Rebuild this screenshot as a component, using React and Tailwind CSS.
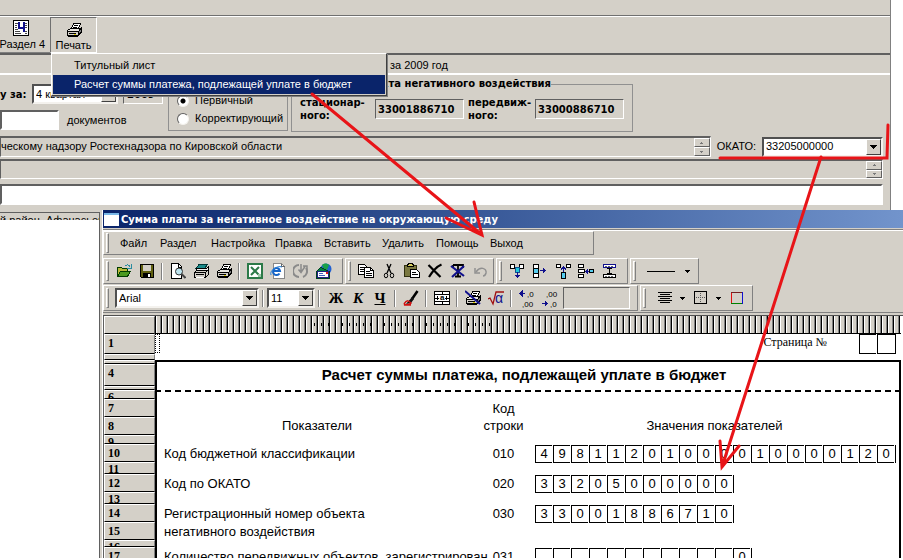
import React from "react";

const ui = "font-['Liberation_Sans',Arial,sans-serif] text-[11px] leading-[13px]";
const boldUi = "font-['DejaVu_Sans',Verdana,sans-serif] font-bold text-[10px] leading-[13px]";
const sunken = "border border-t-[#606060] border-l-[#606060] border-r-white border-b-white";
const raised = "border border-t-white border-l-white border-r-[#808080] border-b-[#808080]";

function Svg({ children, w = 16, h = 16 }) {
  return (
    <svg width={w} height={h} viewBox={`0 0 ${w} ${h}`} shapeRendering="crispEdges" fill="none" className="shrink-0" aria-hidden="true">
      {children}
    </svg>
  );
}

const Down = () => (
  <Svg w={7} h={4}><path d="M0 0h7v1H0zM1 1h5v1H1zM2 2h3v1H2zM3 3h1v1H3z" fill="#000" /></Svg>
);

function Combo({ label, value, className }) {
  return (
    <div className={`relative flex h-[20px] border-2 border-t-[#505050] border-l-[#505050] border-r-[#f4f2ee] border-b-[#f4f2ee] bg-white ${className}`}>
      <select aria-label={label} className="w-full appearance-none bg-white pl-[2px] text-black outline-none">
        <option>{value}</option>
      </select>
      <span className="pointer-events-none absolute inset-y-0 right-0 flex w-[15px] items-center justify-center border border-t-white border-l-white border-r-[#404040] border-b-[#404040] bg-[#d4d0c8]">
        <Down />
      </span>
    </div>
  );
}

function Spinner() {
  return (
    <div className="flex w-[16px] flex-col">
      {["Вверх", "Вниз"].map((n, i) => (
        <button key={n} aria-label={n} className="flex flex-1 items-center justify-center border border-t-white border-l-white border-r-[#606060] border-b-[#606060] bg-[#d4d0c8]">
          <Svg w={3} h={2}>{i ? <path d="M0 0h3v1H0zM1 1h1v1H1z" fill="#777" /> : <path d="M1 0h1v1H1zM0 1h3v1H0z" fill="#777" />}</Svg>
        </button>
      ))}
    </div>
  );
}

const PrinterShape = () => (
  <>
    <path d="M5.500 6.500l2-5h7l-2 5z" fill="#fff" stroke="#000" />
    <path d="M8 3h4M7 5h4" stroke="#000" />
    <path d="M1.500 8.500l3-2h10l-2 3h-11z" fill="#e8e6e0" stroke="#000" />
    <path d="M1.500 9.500h11v4h-11z" fill="#d4d0c8" stroke="#000" />
    <path d="M12.500 9.500l2.500-3v4l-2.500 3z" fill="#808080" stroke="#000" />
    <path d="M3 11.500h7" stroke="#000" /><path d="M8 12h2v1H8z" fill="#e0d000" />
    <path d="M2 14h10v1H2z" fill="#000" />
  </>
);

const icons = {
  open: <><path d="M1.500 13.500v-9h4l1 1h5v3" fill="#b8b838" stroke="#003c00" /><path d="M1.500 13.500l3-5h10l-3 5z" fill="#4a9a20" stroke="#003c00" /><path d="M9 3c2-2 4-1 5 1M15 1v4h-4" stroke="#2a8ca0" /></>,
  save: <><path d="M1.500 1.500h13v13h-12l-1-1z" fill="#606010" stroke="#000" /><path d="M4 2h8v6H4z" fill="#d4d0c8" /><path d="M4 10h8v4H4z" fill="#000" /><path d="M9 11h2v3H9z" fill="#fff" /></>,
  preview: <><path d="M1.500.500h7l3 3v12h-10z" fill="#fff" stroke="#000" /><path d="M8.500 1v3h3" stroke="#000" /><circle cx="9" cy="8.500" r="3.500" fill="#bde4ee" stroke="#333" shapeRendering="auto" /><path d="M11.500 11l4 4" stroke="#444" strokeWidth="2" shapeRendering="auto" /></>,
  printAll: <><path d="M6 1.500h8l-2 4H3z" fill="#1a8a8a" stroke="#003838" /><path d="M3.500 5.500h10l2-2v3l-2 2h-10z" fill="#eee" stroke="#000" /><path d="M1.500 9.500l2-2h11l-2 2v5h-11z" fill="#d4d0c8" stroke="#000" /><path d="M1.500 9.500h11M12.500 9.500l3-3v5l-3 3M3 11.500h8" stroke="#000" /><path d="M3 14h8v1H3z" fill="#fff" /></>,
  print: <PrinterShape />,
  excel: <><path d="M1 1h14v14H1z" fill="#fff" stroke="#2c7a48" strokeWidth="2" /><path d="M4 4l8 8M12 4l-8 8" stroke="#2c7a48" strokeWidth="2" shapeRendering="auto" /><path d="M11 11h3v3h-3z" fill="#9cc8a8" /></>,
  ie: <><path d="M3.500.500h8l3 3v12h-11z" fill="#fff" stroke="#888" /><path d="M11.500.500v3h3" stroke="#666" /><g shapeRendering="auto"><path d="M9.500 10.500a3.500 3.500 0 1 1 .500-2.500H3.500" stroke="#1464c8" strokeWidth="2" /><path d="M1 12C-1 8 7 2 12 4" stroke="#2880d8" /></g></>,
  refresh: <g shapeRendering="auto"><path d="M6 2a6 6 0 0 0 0 12M10 14a6 6 0 0 0 3-9" stroke="#8a8a8a" strokeWidth="2" /><path d="M8 1v8M5.500 6.500L8 9.500l4-6M10 3h4v4" stroke="#8a8a8a" strokeWidth="1.500" /></g>,
  mail: <><g shapeRendering="auto"><circle cx="10" cy="6" r="5.500" fill="#2060d0" /><path d="M6 2c2-2 5-2 7 0l-2 5-3-1z" fill="#18a048" /></g><path d="M.500 8.500l4-4 9 4v7H.500z" fill="#008040" stroke="#004020" /><path d="M1.500 8.500h11v6h-11z" fill="#fff" stroke="#202080" /><path d="M3 10.500h4M3 12.500h6" stroke="#4060c0" /><path d="M10 9h2v2h-2z" fill="#e02020" /></>,
  copy: <><path d="M.500 1.500h6l2 2v8h-8z" fill="#fff" stroke="#000" /><path d="M2 4.500h4M2 6.500h4M2 8.500h4" stroke="#000" /><path d="M6.500 4.500h6l3 3v7h-9z" fill="#fff" stroke="#000" /><path d="M12.500 4.500v3h3M8 8.500h4M8 10.500h6M8 12.500h6" stroke="#000" /></>,
  cut: <g shapeRendering="auto" stroke="#000"><path d="M6 1l4 9M10 1L6 10" strokeWidth="1.300" /><ellipse cx="5" cy="12.500" rx="1.700" ry="2.300" /><ellipse cx="11" cy="12.500" rx="1.700" ry="2.300" /></g>,
  paste: <><path d="M.500 2.500h12v11H.500z" fill="#7a7840" stroke="#303010" /><path d="M4.500.500h4l1 2v1h-6v-1z" fill="#d8d060" stroke="#000" /><path d="M6.500 6.500h6l3 3v5h-9z" fill="#fff" stroke="#000" /><path d="M8 9.500h4M8 11.500h6" stroke="#000" /></>,
  del: <path d="M1.500 2l12 12M14.500 1.500C9 4 5 9 2 14" stroke="#000" strokeWidth="2.200" shapeRendering="auto" />,
  clear: <g shapeRendering="auto"><path d="M3 2h10v3M8 2v11M5 13.500h6M3 2v3" stroke="#000" strokeWidth="1.800" /><path d="M1 3l13 10M14 3L2 14" stroke="#10108c" strokeWidth="2.200" /></g>,
  undo: <g shapeRendering="auto" stroke="#909090" strokeWidth="1.500"><path d="M3 9c4-6 11-4 10 1-.5 2-2 3-3 3" /><path d="M2 5v5h5" /></g>,
  colIn: <><path d="M1.500 1.500h4v4h-4zM10.500 1.500h4v4h-4z" fill="#fff" stroke="#000" /><path d="M6 4h4v5H6z" fill="#20c8d8" stroke="#105090" /><path d="M8 9v6M6 12.500h5" stroke="#10108c" /><path d="M7 13h3v1H7z" fill="#10108c" /></>,
  rowIn: <><path d="M1.500 1.500h5v4h-5zM1.500 10.500h5v4h-5z" fill="#fff" stroke="#000" /><path d="M1.500 5.500h5v5h-5z" fill="#5ce" stroke="#000" /><path d="M8 7.500h5" stroke="#10108c" /><path d="M11 5v5l3-2.500z" fill="#10108c" /></>,
  colOut: <><path d="M1.500 1.500h4v3h-4zM11.500 1.500h4v3h-4z" fill="#fff" stroke="#000" /><path d="M8.500 4v6M6 6.500l2.500-2.500 2.500 2.500" stroke="#10108c" /><path d="M6.500 9.500h4v6h-4z" fill="#5ce" stroke="#000" /></>,
  rowOut: <><path d="M.500 1.500h5v3h-5zM.500 11.500h5v3h-5z" fill="#fff" stroke="#000" /><path d="M.500 6.500h6v3h-6z" fill="#fff" stroke="#000" /><path d="M8 8.500h3" stroke="#10108c" /><path d="M10 6v5L7 8.500z" fill="#10108c" /><path d="M11.500 6.500h4v3h-4z" fill="#5ce" stroke="#000" /></>,
  split: <><path d="M2.500 1.500h12v3h-12z" fill="#fff" stroke="#10108c" /><path d="M2.500 11.500h12v3h-12z" fill="#fff" stroke="#000" /><path d="M4 3.500h9M4 13.500h9" stroke="#666" strokeDasharray="2 1" /><path d="M8 5h1v6H8zM6 5h5v1H6zM6 10h5v1H6z" fill="#000" /></>,
  brush: <g shapeRendering="auto"><path d="M14.500 1L9 9" stroke="#000" strokeWidth="2.500" /><path d="M9 7l2 2-3 4-5 1z" fill="#111" /><path d="M1 14c3-5 5-3 7-1-2 3-5 1-7 2h7" stroke="#d01010" strokeWidth="1.500" /></g>,
  merge: <><path d="M.500 1.500h15v13H.500z" fill="#fff" stroke="#000" /><path d="M.500 4.500h15M.500 11.500h15M8 1v3M8 12v3M1 8h4M11 8h4M3.500 6v4M12.500 6v4" stroke="#000" /><text x="6" y="10" fontSize="8" fontWeight="bold" fill="#000" fontFamily="Liberation Sans">a</text></>,
  noPrint: <><PrinterShape /><path d="M0 1l15 13" stroke="#10108c" strokeWidth="2" shapeRendering="auto" /></>,
  root: <><path d="M0 9l2-1 3 6L8 2h8" stroke="#a01010" shapeRendering="auto" strokeWidth="1.300" /><text x="7" y="13" fontSize="14" fill="#10108c" fontFamily="Liberation Sans">α</text></>,
  decLess: <><path d="M0 4.500h6M3 2v5L.500 4.500z" stroke="#10108c" fill="#10108c" /><text x="8" y="8" fontSize="8" fill="#000" fontFamily="Liberation Sans">,0</text><text x="3" y="18" fontSize="8" fill="#000" fontFamily="Liberation Sans">,00</text></>,
  decMore: <><text x="4" y="8" fontSize="8" fill="#000" fontFamily="Liberation Sans">,00</text><path d="M0 14.500h5M3 12v5l2.500-2.500z" stroke="#10108c" fill="#10108c" /><text x="8" y="18" fontSize="8" fill="#000" fontFamily="Liberation Sans">,0</text></>,
  align: <path d="M1 2.500h14M3 4.500h10M1 6.500h14M3 8.500h10M1 10.500h14M3 12.500h10" stroke="#000" />,
  borders: <><path d="M1.500 1.500h12v12h-12z" stroke="#000" /><path d="M7.500 3v10M3 7.500h10" stroke="#555" strokeDasharray="1 1" /></>,
  colors: <><path d="M2.500 2v12" stroke="#e01010" /><path d="M2 2.500h11" stroke="#702020" /><path d="M13.500 2v12" stroke="#1010d0" /><path d="M2 13.500h11" stroke="#008000" /></>,
};

function Tool({ name, label, h }) {
  return (
    <button aria-label={label} className="flex h-[22px] w-[23px] shrink-0 items-center justify-center">
      <Svg h={h}>{icons[name]}</Svg>
    </button>
  );
}
const Sep = () => <span className="mx-[3px] h-[17px] w-[2px] shrink-0 border-l border-r border-l-[#808080] border-r-white" />;
const Grip = () => <span className="mr-[3px] h-[20px] w-[3px] shrink-0 border border-t-white border-l-white border-r-[#808080] border-b-[#808080]" />;
const Bar = ({ children, className = "" }) => (
  <div className={`flex h-[26px] shrink-0 items-center pl-[2px] ${raised} ${className}`}>{children}</div>
);
const DropBtn = ({ label }) => (
  <button aria-label={label} className="flex h-[22px] w-[13px] items-center justify-center">
    <Svg w={5} h={3}><path d="M0 0h5v1H0zM1 1h3v1H1zM2 2h1v1H2z" fill="#000" /></Svg>
  </button>
);

function Cells({ digits }) {
  return (
    <div className="flex w-max border-r border-black">
      {digits.split("").map((d, i) => (
        <span key={i} className="mr-px h-[18px] w-[17px] border-y border-l border-black text-center leading-[16px]">{d}</span>
      ))}
    </div>
  );
}

const rowSizes = {
  20: ["h-[20px]", "h-[18px]"],
  22: ["h-[22px]", "h-[20px]"],
  18: ["h-[18px]", "h-[16px]"],
  12: ["h-[12px]", "h-[10px]"],
  9: ["h-[9px]", "h-[7px]"],
  7: ["h-[7px]", "h-[5px]"],
  6: ["h-[6px]", "h-[4px]"],
  4: ["h-[4px]", "h-[2px]"],
};

function Row({ n, h, children }) {
  const [outer, inner] = rowSizes[h];
  return (
    <tr className={outer}>
      <th scope="row" className="border border-t-white border-l-white border-b-black border-r-[#808080] bg-[#d4d0c8] p-0 text-left align-top font-['Liberation_Serif',serif] text-[12px] font-bold">
        <div className={`overflow-hidden pl-[3px] ${h < 18 ? "leading-[12px]" : "leading-[16px]"} ${inner}`}>{n}</div>
      </th>
      {children}
    </tr>
  );
}

function DataRow({ n, name, code, digits }) {
  return (
    <Row n={n} h={18}>
      <td className="border-l-2 border-black p-0 pl-[7px] align-top"><div className="h-0 whitespace-nowrap leading-[20px]">{name}</div></td>
      <td className="p-0 text-center align-top"><div className="h-0 leading-[20px]">{code}</div></td>
      <td className="border-r-2 border-black p-0 pl-[5px] align-top"><div className="h-0 pt-px">{digits && <Cells digits={digits} />}</div></td>
    </Row>
  );
}

const Blank = ({ n, h }) => (
  <Row n={n} h={h}><td colSpan={3} className="border-x-2 border-black p-0" /></Row>
);

export default function App() {
  return (
    <div className={`relative h-screen overflow-hidden bg-white text-black ${ui}`}>
      <main className="mr-[12px] flex h-[calc(100%-2px)] flex-col border-r border-[#808080] bg-[#d4d0c8]">
        <div className="h-[16px] shrink-0 border-b border-[#707070]" />
        <div className="flex h-[37px] shrink-0 border-t border-white">
          <button className="flex w-[50px] flex-col items-end border-b border-[#808080] pr-[5px] pt-[3px]">
            <span className="mr-[16px]">
              <Svg><path d="M.500.500h15v15H.500z" fill="#fff" stroke="#000" /><path d="M2 3h3M2 5h2M2 7h2M2 9h3M2 11h5M2 13h6M12 3h2M12 5h2M12 7h2M12 11h2M12 13h2" stroke="#444" /><path d="M6 2v6h6M11 2v10" stroke="#10108c" strokeWidth="2" /></Svg>
            </span>
            <span className="mt-[2px] whitespace-nowrap">Раздел 4</span>
          </button>
          <button className="flex w-[47px] flex-col items-center border border-t-[#707070] border-l-[#707070] border-r-white border-b-white pt-[4px]">
            <Svg><PrinterShape /></Svg>
            <span className="mt-px">Печать</span>
          </button>
        </div>
        <div className="h-[22px] shrink-0 border-t-2 border-b-2 border-t-[#606060] border-b-white pl-[390px] pt-[4px]">за 2009 год</div>

        <div className="flex h-[61px] shrink-0 pt-[7px]">
          <div className="flex w-[168px] flex-col gap-[6px] pt-[2px]">
            <div className="flex items-center">
              <span className={`w-[32px] ${boldUi} whitespace-nowrap`}>у за:</span>
              <Combo label="Квартал" value="4 квартал" className="w-[86px]" />
              <input aria-label="Год" defaultValue="2009" className={`ml-[5px] h-[20px] w-[40px] bg-[#d4d0c8] px-[3px] ${boldUi} ${sunken}`} />
            </div>
            <label className="flex items-center">
              <input className={`mr-[8px] h-[20px] w-[59px] border-2 bg-white ${sunken}`} />
              <span>документов</span>
            </label>
          </div>
          <fieldset className="flex h-[49px] w-[120px] flex-col justify-end gap-[5px] border border-[#909090] pb-[5px] pl-[8px]">
            {["Первичный", "Корректирующий"].map((t, i) => (
              <label key={t} className="flex items-center gap-[6px]">
                <input type="radio" name="kind" defaultChecked={!i} className="m-0 h-[12px] w-[12px] appearance-none rounded-full border border-t-[#606060] border-l-[#606060] border-r-[#f4f2ee] border-b-[#f4f2ee] bg-white checked:bg-[radial-gradient(circle,#000_2px,#fff_3px)]" />
                {t}
              </label>
            ))}
          </fieldset>
          <fieldset className="-mt-[6px] ml-[3px] h-[56px] w-[342px] border border-[#909090]">
            <legend className={`ml-[10px] w-[249px] ${boldUi}`}>
              <span className="flex justify-end whitespace-nowrap leading-[16px]">Код объекта негативного воздействия</span>
            </legend>
            <div className={`flex items-center pl-[8px] pt-[4px] ${boldUi}`}>
              <label htmlFor="st" className="w-[75px]">стационар-<br />ного:</label>
              <input id="st" defaultValue="33001886710" className={`h-[20px] w-[89px] bg-[#d4d0c8] px-[2px] ${boldUi} ${sunken}`} />
              <label htmlFor="mv" className="ml-[4px] w-[67px]">передвиж-<br />ного:</label>
              <input id="mv" defaultValue="33000886710" className={`h-[20px] w-[89px] bg-[#d4d0c8] px-[2px] ${boldUi} ${sunken}`} />
            </div>
          </fieldset>
        </div>

        <div className="flex h-[21px] shrink-0 items-center pr-[7px]">
          <div className={`flex h-[21px] flex-1 justify-between border-t-2 ${sunken}`}>
            <span className="pt-[2px]">ческому надзору Ростехнадзора по Кировской области</span>
            <Spinner />
          </div>
          <span className="mx-[6px]">ОКАТО:</span>
          <Combo label="ОКАТО" value="33205000000" className="w-[121px]" />
        </div>
        <div className={`mr-[7px] mt-[2px] flex h-[20px] shrink-0 justify-end border-t-2 ${sunken}`}><Spinner /></div>
        <input aria-label="Адрес" className={`mr-[7px] mt-[5px] h-[21px] shrink-0 border-2 bg-white ${sunken}`} />
        <div className="mt-[7px] flex flex-1">
          <div className="w-[99px] border-t border-[#606060] bg-white">
            <div className="h-[7px] overflow-hidden whitespace-nowrap bg-[#d4d0c8] pt-px">й район, Афанасьевский</div>
          </div>
          <div className="w-[3px] border-l border-[#606060]" />
        </div>
      </main>

      <ul role="menu" className="absolute left-[51px] top-[53px] z-10 w-[336px] border border-t-white border-l-white border-r-[#404040] border-b-[#404040] bg-[#d4d0c8] p-px pt-[2px] shadow-[1px_1px_0_#808080]">
        <li><button className="h-[19px] w-full pl-[21px] text-left">Титульный лист</button></li>
        <li><button className="h-[19px] w-full bg-[#0a246a] pl-[21px] text-left text-white">Расчет суммы платежа, подлежащей уплате в бюджет</button></li>
      </ul>

      <section className="absolute bottom-[2px] left-[102px] right-0 top-[210px] flex flex-col overflow-hidden border-l border-white bg-[#d4d0c8]">
        <header className={`flex h-[18px] shrink-0 items-center bg-linear-to-r from-[#0a246a] to-[#7294cc] pl-px text-white ${boldUi}`}>
          <span className="mr-[2px] h-[13px] w-[15px] border-t-2 border-[#78b8e8] bg-white" />
          Сумма платы за негативное воздействие на окружающую среду
        </header>
        <div className="mt-px h-[2px] shrink-0 border-t border-b border-t-[#808080] border-b-white" />
        <nav className={`flex h-[24px] w-[491px] shrink-0 items-center pl-[2px] ${raised}`}>
          <Grip />
          {[["Файл", "w-[40px]"], ["Раздел", "w-[51px]"], ["Настройка", "w-[64px]"], ["Правка", "w-[49px]"], ["Вставить", "w-[58px]"], ["Удалить", "w-[54px]"], ["Помощь", "w-[54px]"], ["Выход", "w-[45px]"]].map(([t, w], i) => (
            <button key={t} className={`text-left ${i ? "" : "ml-[8px]"} ${w}`}>{t}</button>
          ))}
        </nav>
        <div className="mt-[3px] flex shrink-0 gap-[2px]">
          <Bar className="w-[240px]"><Grip />
            <Tool name="open" label="Открыть" /><Tool name="save" label="Сохранить" /><Sep />
            <Tool name="preview" label="Просмотр" /><Tool name="printAll" label="Печать всех" /><Tool name="print" label="Печать" /><Sep />
            <Tool name="excel" label="Excel" /><Tool name="ie" label="HTML" /><Tool name="refresh" label="Обновить" /><Tool name="mail" label="Почта" />
          </Bar>
          <Bar className="w-[149px]"><Grip />
            <Tool name="copy" label="Копировать" /><Tool name="cut" label="Вырезать" /><Tool name="paste" label="Вставить" /><Tool name="del" label="Удалить" /><Tool name="clear" label="Очистить" /><Tool name="undo" label="Отменить" />
          </Bar>
          <Bar className="w-[132px]"><Grip />
            <Tool name="colIn" label="Вставить столбец" /><Tool name="rowIn" label="Вставить строку" /><Tool name="colOut" label="Удалить столбец" /><Tool name="rowOut" label="Удалить строку" /><Tool name="split" label="Разделить" />
          </Bar>
          <Bar className="w-[69px]"><Grip />
            <button aria-label="Линия" className="ml-[8px] mr-[6px] flex h-[22px] w-[28px] items-center"><span className="h-px w-full bg-black" /></button>
            <DropBtn label="Вид линии" />
          </Bar>
        </div>
        <div className="mt-px flex shrink-0 gap-[2px]">
          <Bar className="w-[535px]"><Grip />
            <Combo label="Шрифт" value="Arial" className="ml-[3px] w-[144px]" /><Sep />
            <Combo label="Размер" value="11" className="w-[48px]" /><Sep />
            <button className="ml-[2px] w-[22px] font-['Liberation_Serif',serif] text-[15px] font-bold">Ж</button>
            <button className="w-[22px] font-['Liberation_Serif',serif] text-[15px] font-bold italic">К</button>
            <button className="w-[22px] font-['Liberation_Serif',serif] text-[15px] font-bold underline">Ч</button>
            <Sep /><Tool name="brush" label="Кисть" /><Sep /><Tool name="merge" label="Объединить" /><Sep />
            <Tool name="noPrint" label="Не печатать" /><Tool name="root" label="Формула" /><Sep />
            <Tool name="decLess" label="Меньше знаков" h={19} /><Tool name="decMore" label="Больше знаков" h={19} />
            <span className={`ml-[2px] h-[22px] w-[67px] ${sunken}`} />
          </Bar>
          <Bar className="w-[113px]"><Grip />
            <span className="w-[4px]" />
            <Tool name="align" label="Выравнивание" /><DropBtn label="Вид выравнивания" />
            <Tool name="borders" label="Границы" /><DropBtn label="Вид границ" />
            <Tool name="colors" label="Цвет границ" />
          </Bar>
        </div>
        <div className="mt-px h-[4px] shrink-0 border-t border-b border-t-[#808080] border-b-[#505050]" />

        <div className="flex-1 overflow-hidden border-l border-[#606060] bg-white font-['Liberation_Sans',Arial,sans-serif] text-[13px]">
          <table className="w-[calc(100%-2px)] table-fixed border-separate border-spacing-0">
            <colgroup><col className="w-[51px]" /><col className="w-[322px]" /><col className="w-[53px]" /><col /></colgroup>
            <tbody>
              <tr className="h-[18px]">
                <td className="border border-t-white border-l-white border-b-black border-r-[#606060] bg-[#d4d0c8] p-0" />
                <td colSpan={3} className="border-b border-black bg-[repeating-linear-gradient(90deg,#000_0px,#000_1px,#fff_1px,#fff_2px,#d4d0c8_2px,#d4d0c8_5px,#808080_5px,#808080_6px)] p-0">
                  <div className="ml-[159px] h-[3px] w-[178px] bg-[repeating-linear-gradient(90deg,#000_0px,#000_1px,transparent_1px,transparent_7px)]" />
                </td>
              </tr>
              <Row n="1" h={20}>
                <td className="p-0 align-top"><div className="h-[19px] w-[5px] border border-dotted border-black" /></td>
                <td className="p-0" />
                <td className="p-0 align-top">
                  <div className="flex h-[20px] justify-end pr-[5px] font-['Liberation_Serif',serif] text-[12px]">
                    <span className="mr-[32px] leading-[17px]">Страница №</span>
                    <span className="mr-px w-[17px] border border-r-0 border-black" /><span className="w-[19px] border border-black" />
                  </div>
                </td>
              </Row>
              <Row n="" h={6}><td colSpan={3} className="p-0" /></Row>
              <Row n="" h={4}><td colSpan={3} className="border-x-2 border-t-2 border-black p-0" /></Row>
              <Row n="4" h={22}>
                <td colSpan={3} className="border-x-2 border-black p-0 pr-[8px] text-center text-[15px] font-bold leading-[20px]">Расчет суммы платежа, подлежащей уплате в бюджет</td>
              </Row>
              <Row n="" h={4}><td colSpan={3} className="border-x-2 border-black p-0" /></Row>
              <Row n="6" h={9}><td colSpan={3} className="border-x-2 border-t-2 border-black p-0 [border-top-style:dashed]" /></Row>
              <DataRow n="7" code="Код" />
              <Row n="8" h={18}>
                <td className="border-l-2 border-black p-0 text-center leading-[16px]">Показатели</td>
                <td className="p-0 text-center leading-[16px]">строки</td>
                <td className="border-r-2 border-black p-0 text-center leading-[16px]">Значения показателей</td>
              </Row>
              <Blank n="9" h={9} />
              <DataRow n="10" name="Код бюджетной классификации" code="010" digits="49811201000010000120" />
              <Blank n="11" h={12} />
              <DataRow n="12" name="Код по ОКАТО" code="020" digits="33205000000" />
              <Blank n="13" h={12} />
              <DataRow n="14" name="Регистрационный номер объекта" code="030" digits="33001886710" />
              <DataRow n="15" name="негативного воздействия" />
              <Blank n="16" h={7} />
              <DataRow n="17" name="Количество передвижных объектов, зарегистрирован" code="031" digits="           0" />
            </tbody>
          </table>
        </div>
      </section>

      <svg width="903" height="560" viewBox="0 0 903 560" fill="none" stroke="#e81418" strokeWidth="3" strokeLinecap="round" className="pointer-events-none absolute left-0 top-0 z-20" aria-hidden="true">
        <path d="M312 94L482 235M446 218L482 235L474 202" />
        <path d="M720 158H887L888 125" />
        <path d="M821 157L722 467M720 441L722 467L739 446" />
      </svg>
    </div>
  );
}
